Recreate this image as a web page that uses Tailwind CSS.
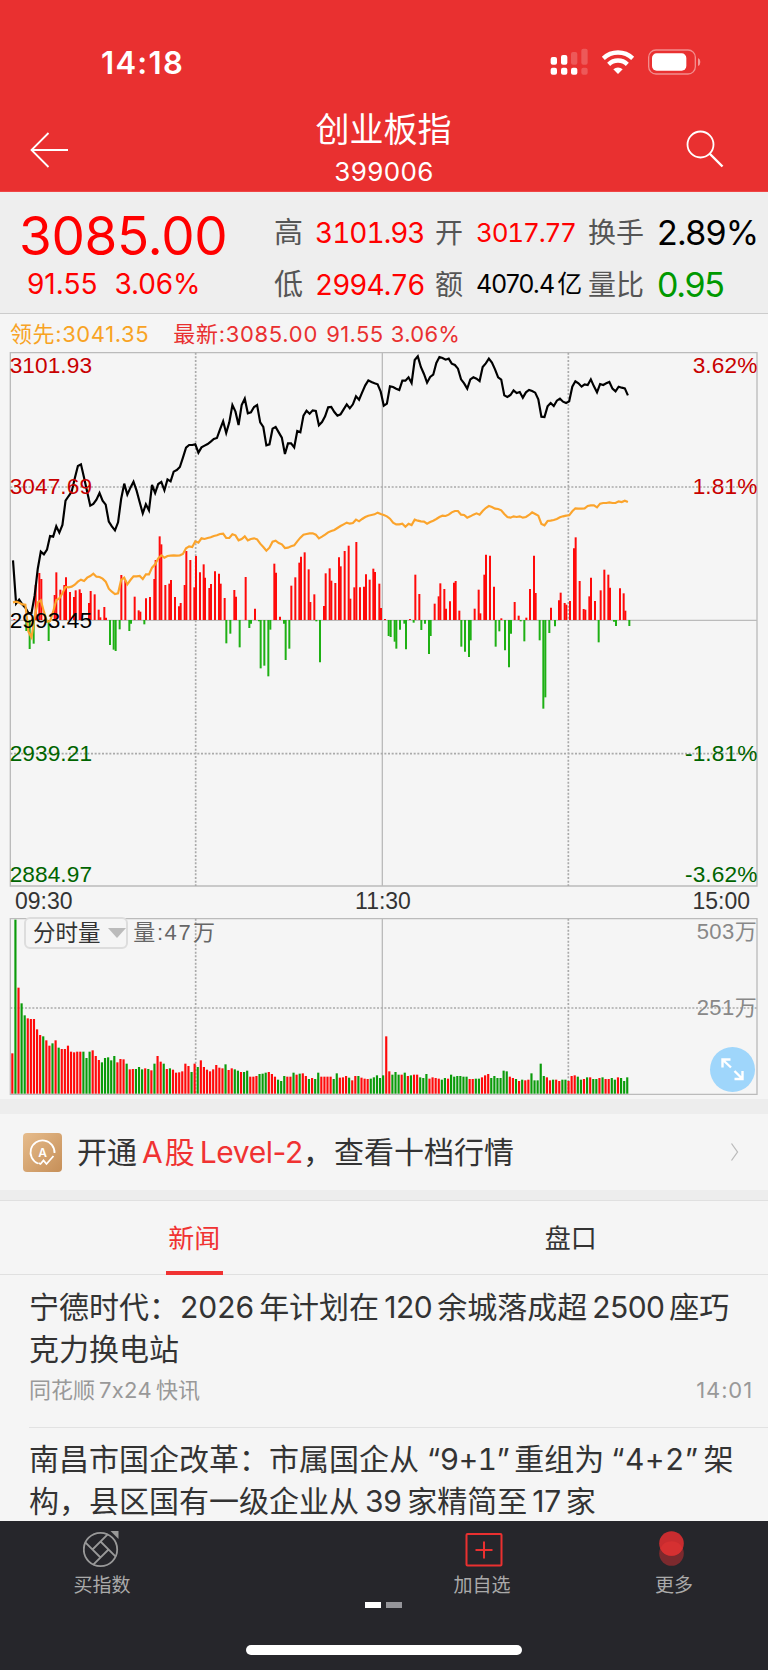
<!DOCTYPE html>
<html lang="zh-CN">
<head>
  <meta charset="UTF-8" />
  <meta name="viewport" content="width=device-width, initial-scale=1.0">
  <title>创业板指 399006</title>

  <!-- Tailwind -->
  <script src="https://cdn.jsdelivr.net/npm/@tailwindcss/browser@4"></script>
</head>
<body class="w-[768px] h-[1670px] overflow-hidden bg-[#f5f5f5] text-[#333] font-['Inter','Noto_Sans_CJK_SC',sans-serif] flex flex-col whitespace-nowrap">

  <!-- Header -->
  <header class="h-48 shrink-0 bg-[#e93030] border-b border-[#f04545] text-white flex flex-col">
    <div class="h-[100px] pt-[43px] pl-[101px] pr-[66px] flex justify-between items-start">
      <span class="text-[31px] leading-10 font-semibold tracking-[1.3px]">14:18</span>
      <!-- signal, wifi, battery -->
      <svg class="mt-[5px] w-[152px] h-[28px]" viewBox="30 25 456 84" fill="#fff">
        <rect x="32" y="52" width="19" height="23" rx="6"/>
        <rect x="63" y="46" width="19" height="29" rx="6"/>
        <rect x="93" y="37" width="19" height="38" rx="6" opacity=".2"/>
        <rect x="124" y="27" width="19" height="48" rx="6" opacity=".2"/>
        <rect x="32" y="84" width="19" height="21" rx="6"/>
        <rect x="63" y="84" width="19" height="21" rx="6"/>
        <rect x="93" y="84" width="19" height="21" rx="6"/>
        <rect x="124" y="84" width="19" height="21" rx="6" opacity=".2"/>
        <g fill="none" stroke="#fff" stroke-width="13">
          <path d="M190 56a64 64 0 0 1 88 0"/>
          <path d="M206 74a40 40 0 0 1 56 0"/>
        </g>
        <path d="M234 103l-14-14a20 20 0 0 1 28 0z"/>
        <rect x="326" y="31" width="140" height="72" rx="22" fill="none" stroke="#fff" stroke-width="4" opacity=".45"/>
        <rect x="336" y="41" width="103" height="52" rx="14"/>
        <path d="M474 55q7 3 7 12t-7 12z" opacity=".5"/>
      </svg>
    </div>
    <div class="flex justify-between px-[30px]">
      <svg class="mt-[32px] w-[40px] h-[36px]" viewBox="0 0 40 36" fill="none" stroke="#fff" stroke-width="1.8"><path d="M38 18H1.5M18.500 1L1.500 18l17 17"/></svg>
      <div class="flex flex-col items-center pl-[10px]">
        <h1 class="text-[34px] leading-[60px] pl-px">创业板指</h1>
        <p class="text-[26px] leading-6 tracking-[0.4px] pl-[2px]">399006</p>
      </div>
      <svg class="mt-[30px] mr-[14px] w-[38px] h-[38px]" viewBox="0 0 38 38" fill="none" stroke="#fff"><circle cx="14.500" cy="14.500" r="13" stroke-width="1.8"/><path d="M23.500 23.500L36.500 36.500" stroke-width="2.400"/></svg>
    </div>
  </header>

  <!-- Quote -->
  <section class="h-[122px] shrink-0 bg-[#eee] border-b border-[#ccc] flex text-[#f00]">
    <div class="w-[274px] pl-[19px] pt-[16px]">
      <div class="text-[53px] leading-[56px] tracking-[-0.3px]">3085.00</div>
      <div class="flex pl-[8px] gap-[17px] text-[28px] leading-[40px]">
        <span>91.55</span>
        <span class="tracking-[-0.1px]">3.06%</span>
      </div>
    </div>
    <div class="grid grid-cols-[41px_120px_41px_112px_69px_auto] grid-rows-[53px_51px] items-center pt-[14px]">
      <span class="text-[29px] text-[#555]">高</span>
      <span class="text-[28px] tracking-[-1px] tabular-nums">3101.93</span>
      <span class="text-[28px] text-[#555]">开</span>
      <span class="text-[26px] tracking-[-1.2px] tabular-nums">3017.77</span>
      <span class="text-[28px] text-[#555]">换手</span>
      <span class="text-[34px] tracking-[-0.8px] text-black">2.89%</span>

      <span class="text-[29px] text-[#555]">低</span>
      <span class="text-[28px] tracking-[-1px] tabular-nums">2994.76</span>
      <span class="text-[28px] text-[#555]">额</span>
      <span class="text-[25px] tracking-[-0.9px] text-black">4070.4<span class="ml-[3px]">亿</span></span>
      <span class="text-[28px] text-[#555]">量比</span>
      <span class="text-[34px] tracking-[-1.3px] text-[#090]">0.95</span>
    </div>
  </section>

  <div class="h-[31px] shrink-0 flex items-center pl-[10px] pt-[10px] gap-[24px] text-[22px] text-[#f8a324]">
    <span class="tracking-[0.6px]">领先:3041.35</span>
    <span class="text-[#e93030]"><span class="tracking-[0.7px]">最新:3085.00</span> <span class="ml-[2px] mr-px tracking-[0.4px]">91.55</span> <span class="tracking-[0.3px]">3.06%</span></span>
  </div>

  <!-- Price chart, 3 units per pixel -->
  <svg class="w-[768px] h-[543px] shrink-0" viewBox="0 0 2304 1629" fill="none">
    <g stroke="#bbb" stroke-width="4">
      <path d="M31 23H2271V1623H31ZM31 826H2271M1147 23V1623"/>
      <path d="M587 23V1623M1705 23V1623M31 426H2271M31 1226H2271" stroke="#aaa" stroke-width="5" stroke-dasharray="6 5"/>
    </g>
    <g id="diff" stroke-width="6"></g>
    <polyline id="price" stroke="#000" stroke-width="6.5"/>
    <polyline id="avg" stroke="#fba42c" stroke-width="6.5"/>
    <g class="font-['Liberation_Sans',sans-serif] text-[68px]" fill="#c80000">
      <text x="29" y="85" textLength="247">3101.93</text>
      <text x="29" y="448" textLength="247">3047.69</text>
      <text x="29" y="849" textLength="247" fill="#000">2993.45</text>
      <text x="29" y="1249" textLength="247" fill="#006400">2939.21</text>
      <text x="29" y="1611" textLength="247" fill="#006400">2884.97</text>
      <text x="2078" y="85" textLength="194">3.62%</text>
      <text x="2078" y="448" textLength="194">1.81%</text>
      <text x="2055" y="1249" textLength="217" fill="#006400">-1.81%</text>
      <text x="2055" y="1611" textLength="217" fill="#006400">-3.62%</text>
    </g>
  </svg>

  <div class="h-[29px] shrink-0 flex justify-between pl-[15px] pr-[18px] font-['Liberation_Sans',sans-serif] text-[23px] leading-[26px]">
    <span>09:30</span>
    <span class="ml-px">11:30</span>
    <span>15:00</span>
  </div>

  <!-- Volume chart -->
  <div class="relative h-[182px] shrink-0">
    <svg class="w-[768px] h-[182px]" viewBox="0 171 2304 546" fill="none">
      <g stroke="#bbb" stroke-width="4">
        <path d="M31 176H2271V703H31ZM1147 176V703"/>
        <path d="M587 176V703M1705 176V703M31 444H2271" stroke="#aaa" stroke-width="5" stroke-dasharray="6 5"/>
      </g>
      <g id="volume" stroke-width="6.500"></g>
      <g class="font-['Liberation_Sans','Noto_Sans_CJK_SC',sans-serif] text-[66px]" fill="#888">
        <text x="2090" y="238" textLength="180">503万</text>
        <text x="2090" y="465" textLength="180">251万</text>
        <text x="400" y="240" textLength="172" fill="#666">量:47</text>
        <text x="579" y="240" fill="#666">万</text>
      </g>
    </svg>
    <button class="absolute left-[24px] top-[0px] w-[104px] h-[32px] border-2 border-[#ddd] rounded-md flex items-center pl-[7px] gap-[7px] text-[22.500px] leading-none bg-[#f5f5f5]">
      分时量
      <span class="border-x-[9px] border-t-[10px] border-x-transparent border-t-[#bbb]"></span>
    </button>
    <button class="absolute left-[710px] top-[130px] size-[45px] rounded-full bg-[#9fd6fb] flex items-center justify-center">
      <svg class="w-[23px] h-[23px]" viewBox="0 0 23 23" fill="none" stroke="#fff" stroke-width="2.400"><path d="M1.500 9.500v-8h8M1.500 1.500l8.500 8M21.500 13v8h-8M21.500 21l-8-8"/></svg>
    </button>
  </div>

  <!-- Level-2 banner -->
  <a class="h-[101px] shrink-0 border-y-[15px] border-b-[10px] border-[#ededed] flex items-center pl-[23px] pr-[29px] text-[30px]">
    <svg class="size-[39px] mr-[15px]" viewBox="0 0 39 39" fill="none">
      <defs><linearGradient id="gold" x2="1" y2="1"><stop stop-color="#e6bc8c"/><stop offset="1" stop-color="#c68f58"/></linearGradient></defs>
      <rect width="39" height="39" rx="4" fill="url(#gold)"/>
      <path d="M15 30.500A12 12 0 1 1 31.500 20M30.500 23l-7 8-3-3.500-3 3.500-2-1" stroke="#fff" stroke-width="1.800"/>
      <text x="19.500" y="24" text-anchor="middle" class="text-[12px] font-semibold" fill="#fff">A</text>
    </svg>
    <span class="pt-px">开通<span class="text-[#f03232]"><span class="ml-[5px] mr-[2px]">A</span>股<span class="ml-[5px] tracking-[-0.4px]">Level-2</span></span>，<span class="ml-px">查看十档行情</span></span>
    <svg class="ml-auto w-[9px] h-[20px]" viewBox="0 0 9 20" fill="none" stroke="#bbb" stroke-width="1.300"><path d="M1.500 1.500L7.500 10l-6 8.500"/></svg>
  </a>

  <!-- Tabs -->
  <nav class="h-[75px] shrink-0 border-t border-b border-[#e0e0e0] pl-[6px] pr-[9px] flex text-[26px]">
    <a class="flex-1 flex justify-center text-[#f03232]"><span class="h-[74px] px-[2.500px] border-b-4 border-[#f03232] leading-[75px]">新闻</span></a>
    <a class="flex-1 text-center leading-[75px]">盘口</a>
  </nav>

  <!-- News -->
  <main class="h-[246px] shrink-0 pl-[29px] overflow-hidden text-[30px] leading-[42px]">
    <article class="h-[153px] pt-[11px] border-b border-[#e2e2e2]">
      <h2>宁德时代：<span class="ml-px mr-[5px]">2026</span>年计划在<span class="mx-[5px] tracking-[-0.4px]">120</span>余城落成超<span class="mx-[5px] tracking-[-0.6px]">2500</span>座巧<br>克力换电站</h2>
      <div class="flex justify-between pr-[15px] text-[22px] leading-[40px] text-[#999]">
        <span>同花顺<span class="mx-1 tracking-[0.3px]">7x24</span>快讯</span>
        <span class="tracking-[0.9px]">14:01</span>
      </div>
    </article>
    <article class="pt-[10px]">
      <h2>南昌市国企改革：市属国企从<span class="ml-[8px] mr-[5px] tracking-[-0.5px] tabular-nums">“9+1”</span>重组为<span class="ml-[7px] mr-[5px] tracking-[0.5px] tabular-nums">“4+2”</span>架<br>构，县区国有一级企业从<span class="mx-[6px] tracking-[-0.4px]">39</span>家精简至<span class="mx-[5px] tracking-[-0.4px]">17</span>家</h2>
    </article>
  </main>

  <!-- Bottom bar -->
  <footer class="relative h-[149px] shrink-0 bg-[#26262b] text-[#aaa] text-[19px] leading-6">
    <div class="grid grid-cols-[204px_180px_196px_188px] pt-[9px] text-center">
      <a class="flex flex-col items-center">
        <svg class="w-[36px] h-[40px] mr-[3px]" viewBox="0 0 36 40" fill="none" stroke="#999" stroke-width="1.800">
          <circle cx="17.500" cy="19.500" r="16.700"/>
          <path d="M9.500 19.500L24.700 4.300M17.500 11.500L32.700 26.700M25.500 19.500L10.300 34.700M17.500 27.500L2.300 12.300"/>
          <path d="M27.500 1h8v8z" fill="#999" stroke="none"/>
        </svg>
        <span class="mt-1">买指数</span>
      </a>
      <span></span>
      <a class="flex flex-col items-center">
        <svg class="w-[38px] h-[40px] ml-[4px]" viewBox="0 0 38 40" fill="none" stroke="#ea3030" stroke-width="2"><rect x="1.500" y="4" width="35" height="31.500" rx="1"/><path d="M10.500 20h17M19 11.500v17"/></svg>
        <span class="mt-1">加自选</span>
      </a>
      <a class="flex flex-col items-center">
        <svg class="w-[26px] h-[40px] mr-[4px]" viewBox="0 0 26 40"><circle cx="12.500" cy="23.500" r="12.300" fill="#7c2a2e"/><circle cx="12.500" cy="13.500" r="12.300" fill="#c82c2f"/><path d="M1.300 18.500a12.300 12.300 0 0 1 22.400 0a12.300 12.300 0 0 1 -22.400 0z" fill="#d63031"/></svg>
        <span class="mt-1">更多</span>
      </a>
    </div>
    <div class="flex justify-center gap-[5px] pt-[4px] pr-[2px]">
      <i class="w-4 h-[6px] bg-white"></i>
      <i class="w-4 h-[6px] bg-[#95959a]"></i>
    </div>
    <div class="mx-auto mt-[37px] w-[276px] h-[10px] rounded-full bg-white"></div>
  </footer>

<script>
(() => {
  /* ---------- One value per trading minute, chart units from the top ---------- */
  const price = [
    646,776,764,778,788,804,804,752,672,620, 628,614,573,575,544,563,540,467,453,440,
    400,363,358,398,440,482,477,464,444,467, 479,530,544,556,532,462,416,449,428,410,
    437,472,505,478,496,420,444,417,411,436, 403,409,380,375,366,338,308,300,300,298,
    323,307,302,297,290,282,279,253,229,264, 232,180,200,240,180,161,205,202,186,180,
    232,246,301,298,251,246,262,278,327,295, 295,307,258,262,212,197,206,196,198,241,
    231,214,187,186,201,212,208,193,178,190, 178,154,164,142,121,106,111,115,118,140,
    182,176,124,126,131,135,107,107,97,114, 45,34,66,87,113,96,89,54,36,39,
    44,41,56,60,71,103,115,131,103,97, 101,108,66,55,41,53,73,97,104,151,
    156,150,136,144,141,158,142,135,138,143, 163,215,216,184,174,183,167,161,170,174,
    169,125,109,115,125,118,120,103,124,142, 117,120,115,111,131,139,125,128,130,151
  ];
  const avg = [
    772,770,773,778,779,860,877,815,772,766, 800,830,828,800,765,760,745,726,727,725,
    719,710,704,708,698,693,686,695,696,701, 710,731,740,747,745,705,698,718,705,694,
    694,693,702,688,688,668,658,640,631,638, 633,632,631,632,631,627,610,604,606,589,
    593,580,582,579,577,573,571,567,566,579, 579,568,571,586,582,574,586,582,580,583,
    596,606,617,608,590,587,594,598,609,608, 604,601,589,578,569,567,565,565,569,580,
    575,569,562,558,555,549,543,538,533,536, 534,524,529,522,516,512,510,508,503,507,
    510,514,521,533,538,538,536,545,536,540, 524,527,529,530,536,531,527,522,516,512,
    513,509,502,498,498,509,510,518,514,509, 505,509,498,489,483,486,491,492,496,507,
    516,518,514,516,514,518,516,510,502,507, 512,537,541,528,527,525,522,517,514,512,
    511,499,490,491,491,490,483,481,481,487, 476,474,474,472,474,474,469,471,467,471
  ];

  /* ---------- [x, end] pairs, above the middle line red, below it green ---------- */
  const diff = [
    [43,822],[79,858],[89,912],[101,896],[107,720],[118,684],[124,702],[146,888],[164,750],[169,682],
    [181,734],[193,720],[198,697],[210,741],[222,756],[227,736],[239,733],[243,744],[267,774],[272,738],
    [284,748],[296,794],[301,817],[313,786],[318,818],[330,900],[341,914],[347,918],[359,853],[364,690],
    [376,706],[388,858],[393,836],[404,755],[416,796],[421,800],[433,838],[438,760],[450,756],[463,702],
    [467,645],[479,574],[484,598],[496,720],[508,716],[513,705],[525,756],[537,784],[542,774],[554,720],
    [559,618],[571,645],[583,727],[588,633],[600,682],[611,658],[615,698],[628,729],[633,717],[645,679],
    [657,686],[662,716],[674,759],[679,895],[691,866],[703,735],[708,755],[719,907],[737,696],[748,849],
    [753,836],[765,791],[777,829],[782,970],[793,962],[805,994],[811,854],[823,656],[828,683],[840,815],
    [852,836],[857,945],[868,911],[874,722],[886,697],[898,653],[903,635],[914,622],[926,673],[931,771],
    [943,748],[949,829],[960,952],[972,783],[977,685],[989,670],[994,707],[1006,714],[1017,637],[1022,664],
    [1034,618],[1046,602],[1051,761],[1063,727],[1069,591],[1080,727],[1092,725],[1098,688],[1109,704],[1120,671],
    [1125,681],[1138,716],[1143,789],[1155,822],[1166,873],[1172,876],[1184,890],[1189,911],[1200,854],[1213,836],
    [1218,913],[1230,822],[1241,833],[1246,689],[1258,747],[1264,855],[1275,836],[1287,927],[1292,873],[1304,776],
    [1316,754],[1321,715],[1333,732],[1338,791],[1350,769],[1362,713],[1367,708],[1378,797],[1384,905],[1395,920],
    [1407,936],[1412,886],[1424,791],[1436,734],[1441,805],[1453,689],[1458,629],[1470,632],[1482,725],[1487,905],
    [1498,859],[1504,820],[1515,916],[1527,967],[1533,866],[1544,771],[1556,812],[1562,829],[1573,889],[1579,818],
    [1590,732],[1602,632],[1607,744],[1619,886],[1630,1091],[1636,1057],[1648,864],[1653,788],[1665,844],[1677,766],
    [1682,743],[1694,774],[1699,779],[1710,768],[1722,610],[1727,577],[1739,708],[1751,792],[1756,794],[1768,754],
    [1773,698],[1785,768],[1796,892],[1802,736],[1813,674],[1825,689],[1830,728],[1842,830],[1848,843],[1860,730],
    [1871,745],[1876,797],[1888,843]
  ];

  /* ---------- Volume bar tops, negative = green ---------- */
  const volume = [
    580,-179,383,-430,-466,475,477,477,508,525, -529,541,557,-550,541,-563,567,567,557,575,
    577,575,575,-575,-594,-575,571,588,600,-607, -594,-592,-601,-588,607,597,598,-611,628,627,
    -627,-621,-628,625,-627,631,-611,588,605,-611, 627,-625,629,638,637,634,611,618,-636,611,
    -621,601,621,629,634,628,615,623,625,-613, 630,625,-628,-632,636,-636,-632,650,650,648,
    -642,-641,-638,636,642,650,-659,-663,-648,650, 650,-638,644,-641,640,648,-657,654,-657,-638,
    650,650,650,650,-657,-640,653,652,648,-653, 661,648,-648,653,656,657,-656,-652,-646,-654,
    -646,529,634,-644,-636,-644,644,-638,648,-646, 644,644,-652,-654,-642,656,652,654,656,-659,
    -654,656,-644,-650,-648,-648,-650,-650,657,657, -656,-656,652,646,642,-654,-648,-654,-654,-632,
    -634,650,654,-657,663,-659,661,659,-640,-661, -661,-611,-648,652,661,-659,659,663,-659,-659,
    663,648,646,-650,-659,657,-652,652,-657,-657, 654,-652,657,657,-654,-659,652,-654,-663,-652
  ];

  const STEP = 9.27;
  const toPoints = (values) => values.map((y, i) => `${(39 + i * STEP).toFixed(1)},${y}`).join(' ');
  const bar = (x, y1, y2, color) => `<path d="M${x} ${y1}V${y2}" stroke="${color}"/>`;

  document.getElementById('price').setAttribute('points', toPoints(price));
  document.getElementById('avg').setAttribute('points', toPoints(avg));
  document.getElementById('diff').innerHTML =
    diff.map(([x, y]) => bar(x, 825, y, y < 825 ? '#ff0a0a' : '#1eb014')).join('');
  document.getElementById('volume').innerHTML =
    volume.map((v, i) => bar((37 + i * STEP).toFixed(1), 701, Math.abs(v), v > 0 ? '#ff0a0a' : '#0a9b0a')).join('');
})();
</script>
</body>
</html>
